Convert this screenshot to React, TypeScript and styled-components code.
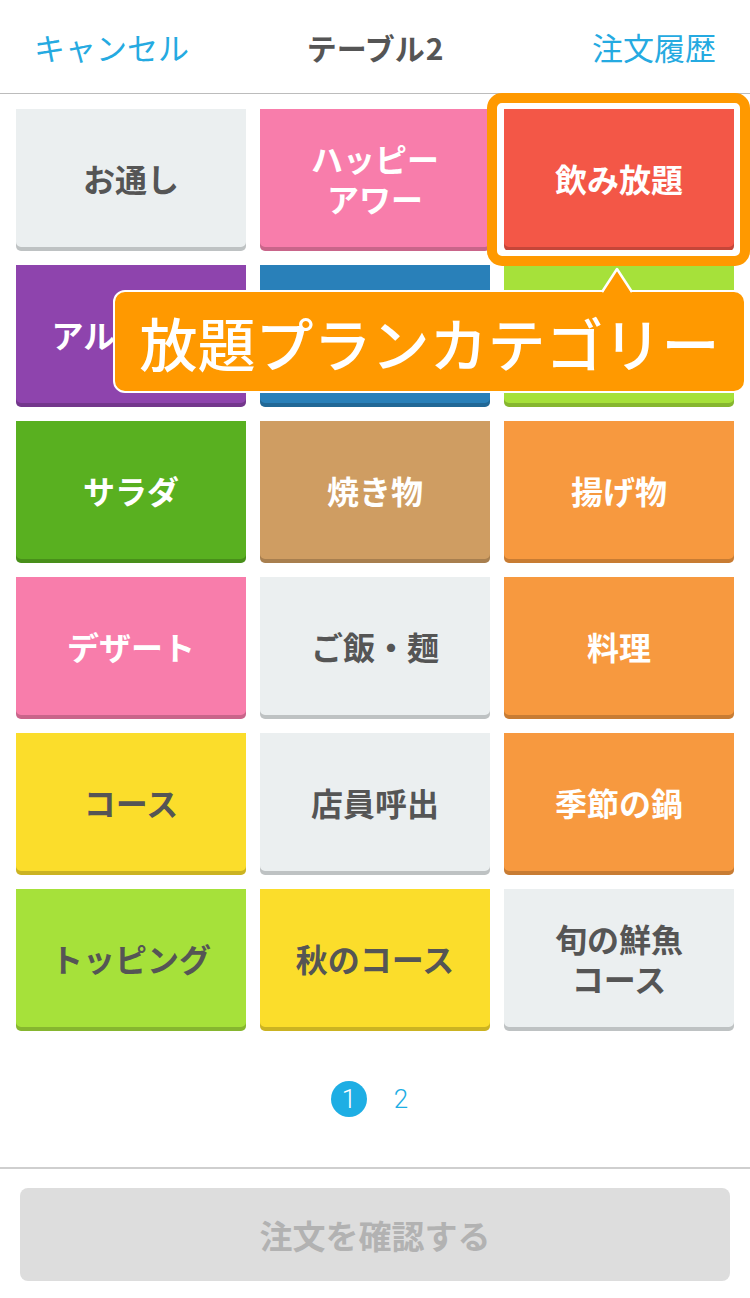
import styled, { createGlobalStyle } from 'styled-components';

const GlobalStyle = createGlobalStyle`
  html, body {
    margin: 0;
    padding: 0;
    background: #fff;
  }
  body {
    font-family: "Noto Sans CJK JP", "Noto Sans", sans-serif;
  }
`;

type Category = {
  label: string;
  color: string;
  dark?: boolean;
};

const categories: Category[] = [
  { label: 'お通し', color: '#ebeff0', dark: true },
  { label: 'ハッピー\nアワー', color: '#f87dab' },
  { label: '飲み放題', color: '#f35747' },
  { label: 'アルコール', color: '#8e44ad' },
  { label: 'ソフトドリンク', color: '#2980b9' },
  { label: 'おつまみ', color: '#a6e13a' },
  { label: 'サラダ', color: '#59b020' },
  { label: '焼き物', color: '#cf9d62' },
  { label: '揚げ物', color: '#f7993f' },
  { label: 'デザート', color: '#f87dab' },
  { label: 'ご飯・麺', color: '#ebeff0', dark: true },
  { label: '料理', color: '#f7993f' },
  { label: 'コース', color: '#fbdd2b', dark: true },
  { label: '店員呼出', color: '#ebeff0', dark: true },
  { label: '季節の鍋', color: '#f7993f' },
  { label: 'トッピング', color: '#a6e13a', dark: true },
  { label: '秋のコース', color: '#fbdd2b', dark: true },
  { label: '旬の鮮魚\nコース', color: '#ebeff0', dark: true },
];

export default function App() {
  return (
    <>
      <GlobalStyle />
      <Page>
        <Header>
          <HeaderLink>キャンセル</HeaderLink>
          <Title>テーブル 2</Title>
          <HeaderLink $right>注文履歴</HeaderLink>
        </Header>

        <Grid>
          {categories.map((c) => (
            <Tile key={c.label} $bg={c.color} $dark={c.dark}>
              {c.label}
            </Tile>
          ))}
        </Grid>

        <Pager>
          <PageDot $active>1</PageDot>
          <PageDot>2</PageDot>
        </Pager>

        <Footer>
          <ConfirmButton disabled>注文を確認する</ConfirmButton>
        </Footer>

        <HighlightFrame />
        <Callout>放題プランカテゴリー</Callout>
        <CalloutArrow width="34" height="27" viewBox="0 0 34 27">
          <polygon points="2,27 17,2 32,27" fill="#ff9900" />
          <polyline points="2,25 17,2 32,25" fill="none" stroke="#fff" strokeWidth="2.5" strokeLinejoin="round" />
        </CalloutArrow>
      </Page>
    </>
  );
}

const Page = styled.div`
  position: relative;
  width: 750px;
  height: 1298px;
  overflow: hidden;
  background: #fff;
`;

const Header = styled.header`
  height: 93px;
  display: grid;
  grid-template-columns: 1fr auto 1fr;
  align-items: center;
  padding: 0 34px;
  border-bottom: 1px solid #bcbcbc;
`;

const HeaderLink = styled.span<{ $right?: boolean }>`
  font-size: 31px;
  color: #25aae1;
  font-weight: 400;
  text-align: ${(p) => (p.$right ? 'right' : 'left')};
`;

const Title = styled.h1`
  margin: 0;
  font-size: 30px;
  font-weight: 700;
  color: #555;
  word-spacing: -6px;
`;

const Grid = styled.div`
  display: grid;
  grid-template-columns: repeat(3, 230px);
  grid-auto-rows: 142px;
  gap: 14px;
  padding: 15px 16px 0;
`;

const Tile = styled.div<{ $bg: string; $dark?: boolean }>`
  display: flex;
  align-items: center;
  justify-content: center;
  padding-bottom: 4px;
  box-sizing: border-box;
  background: ${(p) => p.$bg};
  color: ${(p) => (p.$dark ? '#555' : '#fff')};
  box-shadow: inset 0 -4px 0 rgba(0, 0, 0, 0.19);
  border-radius: 0 0 5px 5px;
  font-size: 32px;
  font-weight: 700;
  line-height: 40px;
  text-align: center;
  white-space: pre-line;
`;

const Pager = styled.div`
  display: flex;
  justify-content: center;
  gap: 16px;
  padding: 50px 0 50px;
  border-bottom: 2px solid #cfcfcf;
`;

const PageDot = styled.span<{ $active?: boolean }>`
  width: 36px;
  height: 36px;
  border-radius: 50%;
  display: flex;
  align-items: center;
  justify-content: center;
  font-family: Roboto, "Noto Sans", sans-serif;
  font-size: 26px;
  font-weight: 300;
  background: ${(p) => (p.$active ? '#1eaee4' : 'transparent')};
  color: ${(p) => (p.$active ? '#fff' : '#1eaee4')};
`;

const Footer = styled.footer`
  padding: 19px 20px;
`;

const ConfirmButton = styled.button`
  width: 100%;
  height: 93px;
  border: none;
  border-radius: 8px;
  background: #dddddd;
  color: #b2b2b2;
  font-family: "Noto Sans CJK JP", sans-serif;
  font-size: 33px;
  font-weight: 700;
`;

const HighlightFrame = styled.div`
  position: absolute;
  left: 487px;
  top: 93px;
  width: 263px;
  height: 173px;
  box-sizing: border-box;
  border: 10px solid #ff9900;
  border-radius: 15px;
  box-shadow: inset 0 0 0 6px #fff;
  pointer-events: none;
`;

const Callout = styled.div`
  position: absolute;
  left: 113px;
  top: 290px;
  width: 633px;
  height: 103px;
  box-sizing: border-box;
  display: flex;
  align-items: center;
  justify-content: center;
  background: #ff9900;
  border: 2px solid #fff;
  border-radius: 12px;
  color: #fff;
  font-size: 58px;
  font-weight: 500;
`;

const CalloutArrow = styled.svg`
  position: absolute;
  left: 600px;
  top: 267px;
`;
